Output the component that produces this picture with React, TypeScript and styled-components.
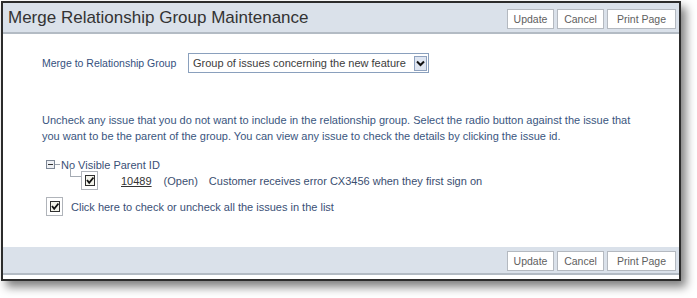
import styled, { createGlobalStyle } from "styled-components";

const GlobalStyle = createGlobalStyle`
  html, body {
    margin: 0;
    padding: 0;
    background: #ffffff;
  }
  body {
    font-family: "Liberation Sans", Arial, sans-serif;
  }
`;

const Page = styled.div`
  width: 697px;
  height: 298px;
  padding: 1px 0 0 1px;
  box-sizing: border-box;
`;

const Frame = styled.div`
  width: 680px;
  height: 280px;
  box-sizing: border-box;
  border: 2px solid #2c2c2c;
  box-shadow: 5px 6px 9px rgba(0, 0, 0, 0.5);
  background: #ffffff;
  display: flex;
  flex-direction: column;
`;

const Bar = styled.div<{ $tall?: boolean }>`
  height: ${(p) => (p.$tall ? "31px" : "28px")};
  box-sizing: border-box;
  background: #dae1ea;
  border-bottom: 2px solid #b3bbc4;
  display: flex;
  align-items: flex-start;
  justify-content: space-between;
  padding: ${(p) => (p.$tall ? "6px" : "4px")} 3px 0 5px;
`;

const Title = styled.div`
  font-size: 17px;
  color: #333333;
  margin-top: -1px;
`;

const Buttons = styled.div`
  display: flex;
  gap: 3px;
  margin-left: auto;
`;

const Button = styled.button<{ $w: number }>`
  width: ${(p) => p.$w}px;
  height: 20px;
  padding: 0;
  background: #ffffff;
  border: 1px solid #b4b9c0;
  color: #606060;
  font-family: "Liberation Sans", Arial, sans-serif;
  font-size: 10.5px;
`;

const Content = styled.div`
  flex: 1;
  padding: 19px 0 0 39px;
  color: #3a5076;
  font-size: 11px;
`;

const Row = styled.div`
  display: flex;
  align-items: center;
`;

const Label = styled.span`
  width: 146px;
  color: #34507e;
  font-size: 10.5px;
`;

const Select = styled.div`
  width: 241px;
  height: 20px;
  box-sizing: border-box;
  border: 1px solid #8aa0bd;
  display: flex;
  align-items: center;
  justify-content: space-between;
  padding: 0 1px 0 4px;
  color: #3c3c3c;
  font-size: 11px;
`;

const Arrow = styled.span`
  width: 13px;
  height: 15px;
  box-sizing: border-box;
  border: 1px solid #8fa2bf;
  background: #dfe6f2;
  display: flex;
  align-items: center;
  justify-content: center;
`;

const Help = styled.p`
  margin: 39px 0 0 0;
  line-height: 16px;
  color: #3a5680;
`;

const Tree = styled.div`
  margin-top: 14px;
  margin-left: 4px;
`;

const Node = styled.div`
  display: flex;
  align-items: center;
  height: 13px;
`;

const Toggle = styled.span`
  width: 7px;
  height: 7px;
  border: 1px solid #7d8796;
  background: #eef0f4;
  display: flex;
  align-items: center;
  justify-content: center;
`;

const Dash = styled.span`
  width: 5px;
  border-top: 1px solid #9aa2ad;
  margin: 0 1px 0 0;
`;

const Child = styled.div`
  display: flex;
  align-items: flex-start;
  margin-left: 24px;
`;

const Elbow = styled.span`
  width: 10px;
  height: 9px;
  margin-top: -4px;
  border-left: 1px solid #a5abb3;
  border-bottom: 1px solid #a5abb3;
`;

const Issue = styled.div`
  display: flex;
  align-items: center;
  color: #3a4e70;
`;

const Link = styled.a`
  margin: 0 12px 0 23px;
  color: #333333;
  text-decoration: underline;
`;

const Status = styled.span`
  margin-right: 11px;
`;

const Box = styled.span`
  width: 17px;
  height: 19px;
  box-sizing: border-box;
  border: 1px solid #b0b4ba;
  background: #ffffff;
  display: flex;
  padding: 3px 0 0 3px;
`;

const Tick = styled.span`
  width: 10px;
  height: 11px;
  box-sizing: border-box;
  border: 1px solid #303030;
  background: #f3f3ea;
  display: flex;
  align-items: center;
  justify-content: center;
`;

const All = styled.div`
  display: flex;
  align-items: center;
  gap: 8px;
  margin-top: 7px;
`;

const Check = () => (
  <Box>
    <Tick>
      <svg width="8" height="9" viewBox="0 0 8 9">
        <path d="M1 4 L3.2 6.8 L7.5 1.5" fill="none" stroke="#111" strokeWidth="1.8" />
      </svg>
    </Tick>
  </Box>
);

const ButtonSet = () => (
  <Buttons>
    <Button $w={47}>Update</Button>
    <Button $w={47}>Cancel</Button>
    <Button $w={69}>Print Page</Button>
  </Buttons>
);

export default function App() {
  return (
    <Page>
      <GlobalStyle />
      <Frame>
        <Bar $tall>
          <Title>Merge Relationship Group Maintenance</Title>
          <ButtonSet />
        </Bar>
        <Content>
          <Row>
            <Label>Merge to Relationship Group</Label>
            <Select>
              <span>Group of issues concerning the new feature</span>
              <Arrow>
                <svg width="9" height="7" viewBox="0 0 9 7">
                  <path d="M1 1.5 L4.5 5 L8 1.5" fill="none" stroke="#111" strokeWidth="2" />
                </svg>
              </Arrow>
            </Select>
          </Row>
          <Help>
            Uncheck any issue that you do not want to include in the relationship group. Select the radio button against the issue that
            <br />
            you want to be the parent of the group. You can view any issue to check the details by clicking the issue id.
          </Help>
          <Tree>
            <Node>
              <Toggle>
                <svg width="5" height="5" viewBox="0 0 5 5">
                  <path d="M0 2.5 H5" stroke="#333" strokeWidth="1" />
                </svg>
              </Toggle>
              <Dash />
              <span>No Visible Parent ID</span>
            </Node>
            <Child>
              <Elbow />
              <Issue>
                <Check />
                <Link>10489</Link>
                <Status>(Open)</Status>
                <span>Customer receives error CX3456 when they first sign on</span>
              </Issue>
            </Child>
            <All>
              <Check />
              <span>Click here to check or uncheck all the issues in the list</span>
            </All>
          </Tree>
        </Content>
        <Bar>
          <span />
          <ButtonSet />
        </Bar>
        <div style={{ height: 4 }} />
      </Frame>
    </Page>
  );
}
